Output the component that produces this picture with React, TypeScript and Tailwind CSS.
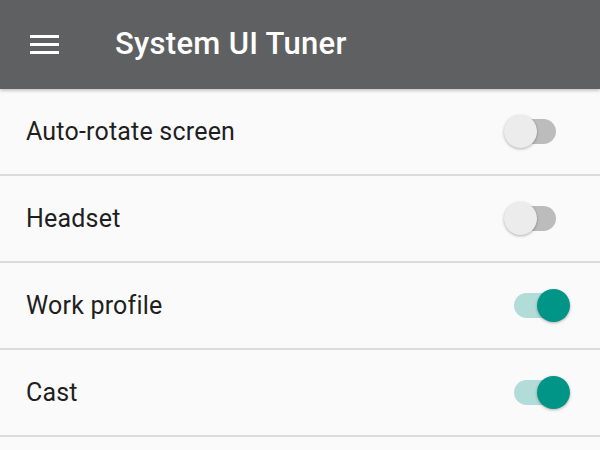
import { useState } from "react";

type Item = { label: string; on: boolean };

const items: Item[] = [
  { label: "Auto-rotate screen", on: false },
  { label: "Headset", on: false },
  { label: "Work profile", on: true },
  { label: "Cast", on: true },
];

function Toggle({ on, onClick }: { on: boolean; onClick: () => void }) {
  return (
    <button
      type="button"
      onClick={onClick}
      className="relative h-[34px] w-[54px] flex items-center"
    >
      <span
        className={`absolute left-[10px] right-[2px] h-[25px] rounded-full ${
          on ? "bg-[#b2dcd8]" : "bg-[#bcbcbc]"
        }`}
      />
      <span
        className={`absolute top-0 h-[33px] w-[33px] rounded-full shadow-[0_1px_3px_rgba(0,0,0,0.3)] ${
          on ? "right-[-12px] bg-[#009587]" : "left-0 bg-[#ececec]"
        }`}
      />
    </button>
  );
}

export default function App() {
  const [state, setState] = useState(items.map((i) => i.on));

  return (
    <div
      className="w-[600px] h-[450px] overflow-hidden bg-[#fbfafa]"
      style={{ fontFamily: "Roboto, 'Noto Sans', sans-serif" }}
    >
      {/* Toolbar */}
      <header className="h-[89px] bg-[#5f6061] flex items-center shadow-[0_2px_3px_rgba(0,0,0,0.2)] relative z-10">
        <div className="ml-[30px] flex flex-col gap-[5px] w-[29px]">
          <span className="h-[3px] bg-white" />
          <span className="h-[3px] bg-white" />
          <span className="h-[3px] bg-white" />
        </div>
        <h1 className="ml-[56px] text-[31px] font-medium text-white tracking-[0.3px]">
          System UI Tuner
        </h1>
      </header>

      {/* List */}
      <ul>
        {items.map((item, i) => (
          <li
            key={item.label}
            className="h-[87px] flex items-center justify-between border-b-2 border-[#dcdbdb] pl-[26px] pr-[42px]"
          >
            <span className="text-[25px] text-[#1f1f1f] tracking-[0.2px]">
              {item.label}
            </span>
            <Toggle
              on={state[i]}
              onClick={() =>
                setState((s) => s.map((v, j) => (j === i ? !v : v)))
              }
            />
          </li>
        ))}
      </ul>
    </div>
  );
}
